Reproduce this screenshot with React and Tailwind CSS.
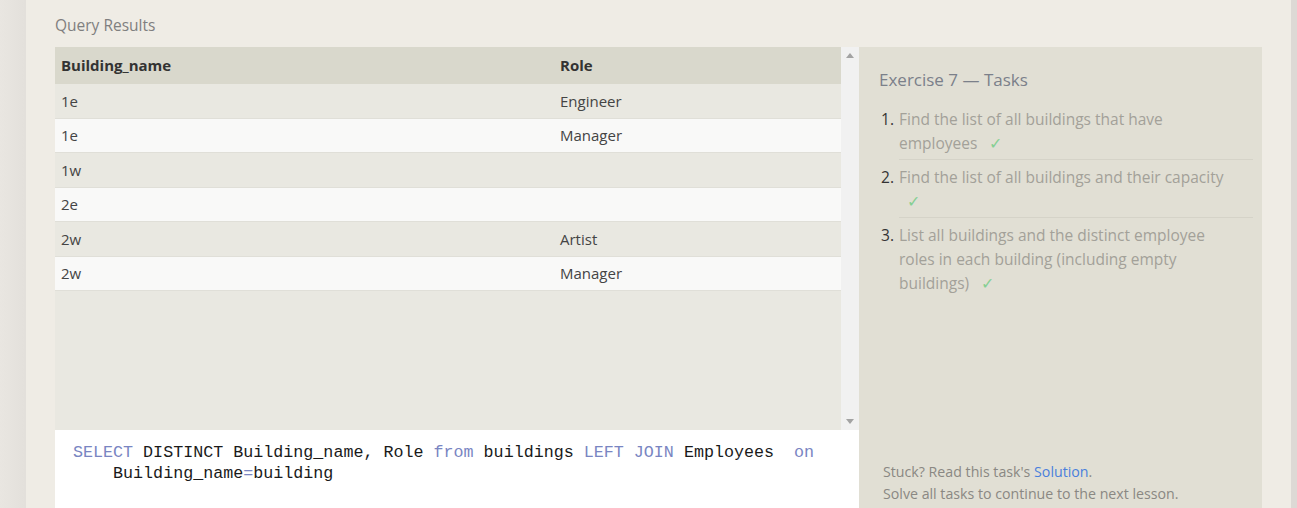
import React from "react";

const rows = [
  ["1e", "Engineer"],
  ["1e", "Manager"],
  ["1w", ""],
  ["2e", ""],
  ["2w", "Artist"],
  ["2w", "Manager"],
];

const tasks = [
  "Find the list of all buildings that have employees",
  "Find the list of all buildings and their capacity",
  "List all buildings and the distinct employee roles in each building (including empty buildings)",
];

function Kw({ children }) {
  return <span className="text-[#7985c2]">{children}</span>;
}

function App() {
  return (
    <div
      className="flex h-[508px] w-full overflow-hidden bg-[#e6e3de]"
      style={{ fontFamily: '"Open Sans", "Noto Sans", sans-serif' }}
    >
      <div className="w-[26px] shrink-0 bg-gradient-to-r from-[#e9e6e1] to-[#e3e0db]" />

      <div className="flex flex-1 flex-col bg-[#efece5] pl-[29px] pr-[29px] pt-[14px]">
        <div className="h-[33px] text-[15.5px] leading-[22px] text-[#7f7f7f]">Query Results</div>

        <div className="flex flex-1">
          {/* results + editor */}
          <div className="flex w-[804px] shrink-0 flex-col">
            <div className="flex h-[383px]">
              <div className="flex-1 bg-[#e9e8e1] text-[15px] text-[#444]">
                <div className="flex h-[37px] items-center bg-[#d9d8cc] font-bold text-[#333]">
                  <div className="w-[499px] pl-[6px]">Building_name</div>
                  <div className="pl-[6px]">Role</div>
                </div>
                {rows.map(([b, r], i) => (
                  <div
                    key={i}
                    className={
                      "flex h-[34.5px] items-center border-b border-[#e0dfd8] " +
                      (i % 2 === 0 ? "bg-[#e9e8e1]" : "bg-[#f9f9f8]")
                    }
                  >
                    <div className="w-[499px] pl-[6px]">{b}</div>
                    <div className="pl-[6px]">{r}</div>
                  </div>
                ))}
              </div>
              <div className="flex w-[18px] flex-col items-center justify-between bg-[#f1f1f1] py-[6px]">
                <svg width="8" height="5" viewBox="0 0 8 5">
                  <path d="M0 5 L4 0 L8 5 Z" fill="#a3a3a3" />
                </svg>
                <svg width="8" height="5" viewBox="0 0 8 5">
                  <path d="M0 0 L4 5 L8 0 Z" fill="#a3a3a3" />
                </svg>
              </div>
            </div>

            <div
              className="flex-1 bg-white pl-[18px] pt-[12px] text-[16.7px] leading-[21px] text-[#1a1a1a]"
              style={{ fontFamily: '"Liberation Mono", "DejaVu Sans Mono", monospace' }}
            >
              <div className="whitespace-pre">
                <Kw>SELECT</Kw> DISTINCT Building_name, Role <Kw>from</Kw> buildings <Kw>LEFT</Kw>{" "}
                <Kw>JOIN</Kw> Employees  <Kw>on</Kw>
              </div>
              <div className="whitespace-pre">
                {"    "}Building_name<Kw>=</Kw>building
              </div>
            </div>
          </div>

          {/* tasks panel */}
          <div className="flex flex-1 flex-col bg-[#e1dfd4] pl-[20px] pr-[9px] pt-[20px]">
            <div className="text-[17px] leading-[26px] text-[#7b808a]">Exercise 7 — Tasks</div>
            <ol className="mt-[14px]">
              {tasks.map((t, i) => (
                <li
                  key={i}
                  className={
                    "flex text-[15.5px] leading-[24px] " +
                    (i < tasks.length - 1 ? "mb-[5px]" : "")
                  }
                >
                  <span className="w-[20px] shrink-0 pl-[2px] text-[#333]">{i + 1}.</span>
                  <div
                    className={
                      "flex-1 pb-[4px] text-[#a3a199] " +
                      (i < tasks.length - 1 ? "border-b border-[#d5d3c8]" : "")
                    }
                  >
                    <div className="max-w-[334px]">
                      {t}{" "}
                      <span className="ml-[8px] text-[#86cf93]">✓</span>
                    </div>
                  </div>
                </li>
              ))}
            </ol>
            <div className="flex-1" />
            <div className="pb-[3px] pl-[4px] text-[14.2px] leading-[22px] text-[#8a8883]">
              <div>
                Stuck? Read this task's <span className="text-[#4a7fdc]">Solution</span>.
              </div>
              <div>Solve all tasks to continue to the next lesson.</div>
            </div>
          </div>
        </div>
      </div>

      <div className="w-[6px] shrink-0 bg-[#ddd9d5]" />
    </div>
  );
}

export default App;
